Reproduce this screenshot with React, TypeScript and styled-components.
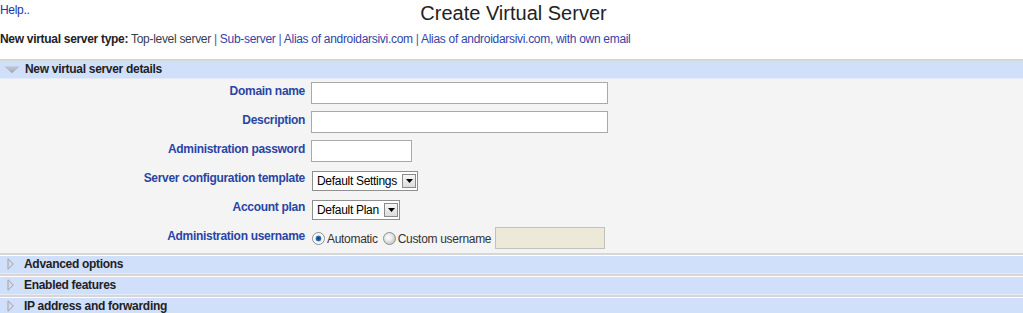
import React from 'react';
import styled, { createGlobalStyle } from 'styled-components';

const GlobalStyle = createGlobalStyle`
  html, body {
    margin: 0;
    padding: 0;
    background: #ffffff;
    font-family: "Liberation Sans", Arial, sans-serif;
    font-size: 12px;
    letter-spacing: -0.3px;
    color: #333;
  }
`;

const Page = styled.div`
  width: 1023px;
  height: 313px;
  overflow: hidden;
`;

const TopRow = styled.div`
  display: grid;
  grid-template-columns: 1fr auto 1fr;
  align-items: start;
`;

const HelpLink = styled.a`
  color: #2233aa;
  text-decoration: none;
  line-height: 14px;
  padding-top: 3px;
`;

const Title = styled.h1`
  margin: 2px 0 0 4px;
  font-size: 20px;
  font-weight: normal;
  line-height: 23px;
  letter-spacing: 0;
  color: #222;
`;

const TypeLine = styled.div`
  margin-top: 7px;
  line-height: 14px;
  color: #333;
`;

const TypeLabel = styled.b`
  color: #222;
`;

const TypeLink = styled.a<{ current?: boolean }>`
  color: ${p => (p.current ? '#3a3a4a' : '#3344aa')};
  text-decoration: none;
`;

const Sep = styled.span`
  color: #4455aa;
`;

const Sections = styled.div`
  margin-top: 13px;
`;

const Bar = styled.div<{ open?: boolean }>`
  display: flex;
  align-items: center;
  gap: 6px;
  height: ${p => (p.open ? '17px' : '18px')};
  background: #d0dffa;
  border-top: 2px solid #d6d6d6;
  border-bottom: 1px solid #e4eaf6;
  box-shadow: ${p => (p.open ? 'none' : 'inset 0 1px 0 #ffffff')};
  padding-left: ${p => (p.open ? '5px' : '7px')};
  font-weight: bold;
  color: #222;
  line-height: 17px;
`;

const BarText = styled.span<{ open?: boolean }>`
  margin-left: ${p => (p.open ? '0' : '4px')};
`;

const Body = styled.div`
  background: #f4f4f4;
  display: grid;
  grid-template-columns: 305px 1fr;
  grid-auto-rows: 29px;
  column-gap: 6px;
`;

const Label = styled.div`
  display: flex;
  align-items: center;
  justify-content: flex-end;
  font-weight: bold;
  color: #2a44a6;
  padding-bottom: 5px;
`;

const Cell = styled.div`
  display: flex;
  align-items: center;
`;

const TextInput = styled.input<{ w: number; disabledLook?: boolean }>`
  box-sizing: border-box;
  width: ${p => p.w}px;
  height: 22px;
  margin: 0 0 1px;
  padding: 1px 3px;
  border: 1px solid ${p => (p.disabledLook ? '#c2c2bc' : '#a9a9a9')};
  background: ${p => (p.disabledLook ? '#ece9d8' : '#ffffff')};
  font-family: inherit;
  font-size: 12px;
  outline: none;
`;

const SelectBox = styled.div<{ w: number }>`
  box-sizing: border-box;
  width: ${p => p.w}px;
  height: 20px;
  margin-left: 1px;
  display: flex;
  align-items: center;
  justify-content: space-between;
  border: 1px solid #8f8f8f;
  background: #fff;
  padding: 0 1px 0 4px;
  color: #000;
  font-size: 12px;
  white-space: nowrap;
`;

const DropButton = styled.span`
  box-sizing: border-box;
  flex: none;
  width: 14px;
  height: 14px;
  display: flex;
  align-items: center;
  justify-content: center;
  border: 1px solid #8a8a8a;
  background: linear-gradient(#f6f6f6, #dcdcdc);
`;

const RadioDot = styled.span<{ checked?: boolean }>`
  box-sizing: border-box;
  flex: none;
  width: 13px;
  height: 13px;
  border-radius: 50%;
  border: 1px solid #8c8e8f;
  background: ${p =>
    p.checked
      ? 'radial-gradient(circle, #0d3f73 0, #2b6fb0 2.5px, #e8e8e8 3.2px, #ffffff 5px)'
      : 'radial-gradient(circle at 40% 40%, #ffffff 0, #e6e6e6 4px, #cfcfcf 6px)'};
  margin: 0 2px 0 1px;
`;

const RadioText = styled.span`
  color: #333;
  margin-right: 4px;
`;

const Arrow: React.FC<{ open?: boolean }> = ({ open }) =>
  open ? (
    <svg width="14" height="8" viewBox="0 0 14 8">
      <defs>
        <linearGradient id="dg" x1="0" y1="0" x2="0" y2="1">
          <stop offset="0" stopColor="#c4cad6" />
          <stop offset="1" stopColor="#9aa2b2" />
        </linearGradient>
      </defs>
      <polygon points="0.5,1 13.5,1 7,7" fill="url(#dg)" stroke="#a8aebb" strokeWidth="0.6" />
    </svg>
  ) : (
    <svg width="7" height="12" viewBox="0 0 7 12">
      <polygon points="1,0.8 6.3,6 1,11.2" fill="#d6dce6" stroke="#9ca3af" strokeWidth="1" />
    </svg>
  );

const Triangle = () => (
  <svg width="7" height="4" viewBox="0 0 7 4">
    <polygon points="0,0 7,0 3.5,4" fill="#000" />
  </svg>
);

const Radio: React.FC<{ checked?: boolean; label: string }> = ({ checked, label }) => (
  <>
    <RadioDot checked={checked} />
    <RadioText>{label}</RadioText>
  </>
);

const collapsed = ['Advanced options', 'Enabled features', 'IP address and forwarding'];

export default function App() {
  return (
    <Page>
      <GlobalStyle />
      <TopRow>
        <HelpLink href="#">Help..</HelpLink>
        <Title>Create Virtual Server</Title>
        <span />
      </TopRow>
      <TypeLine>
        <TypeLabel>New virtual server type:</TypeLabel>{' '}
        <TypeLink current>Top-level server</TypeLink> <Sep>|</Sep>{' '}
        <TypeLink href="#">Sub-server</TypeLink> <Sep>|</Sep>{' '}
        <TypeLink href="#">Alias of androidarsivi.com</TypeLink> <Sep>|</Sep>{' '}
        <TypeLink href="#">Alias of androidarsivi.com, with own email</TypeLink>
      </TypeLine>

      <Sections>
        <Bar open>
          <Arrow open />
          <BarText open>New virtual server details</BarText>
        </Bar>
        <Body>
          <Label>Domain name</Label>
          <Cell>
            <TextInput w={297} />
          </Cell>
          <Label>Description</Label>
          <Cell>
            <TextInput w={297} />
          </Cell>
          <Label>Administration password</Label>
          <Cell>
            <TextInput w={101} type="password" />
          </Cell>
          <Label>Server configuration template</Label>
          <Cell>
            <SelectBox w={106}>
              Default Settings
              <DropButton>
                <Triangle />
              </DropButton>
            </SelectBox>
          </Cell>
          <Label>Account plan</Label>
          <Cell>
            <SelectBox w={88}>
              Default Plan
              <DropButton>
                <Triangle />
              </DropButton>
            </SelectBox>
          </Cell>
          <Label>Administration username</Label>
          <Cell>
            <Radio checked label="Automatic" />
            <Radio label="Custom username" />
            <TextInput w={110} disabledLook readOnly />
          </Cell>
        </Body>
        {collapsed.map(name => (
          <Bar key={name}>
            <Arrow />
            <BarText>{name}</BarText>
          </Bar>
        ))}
      </Sections>
    </Page>
  );
}
